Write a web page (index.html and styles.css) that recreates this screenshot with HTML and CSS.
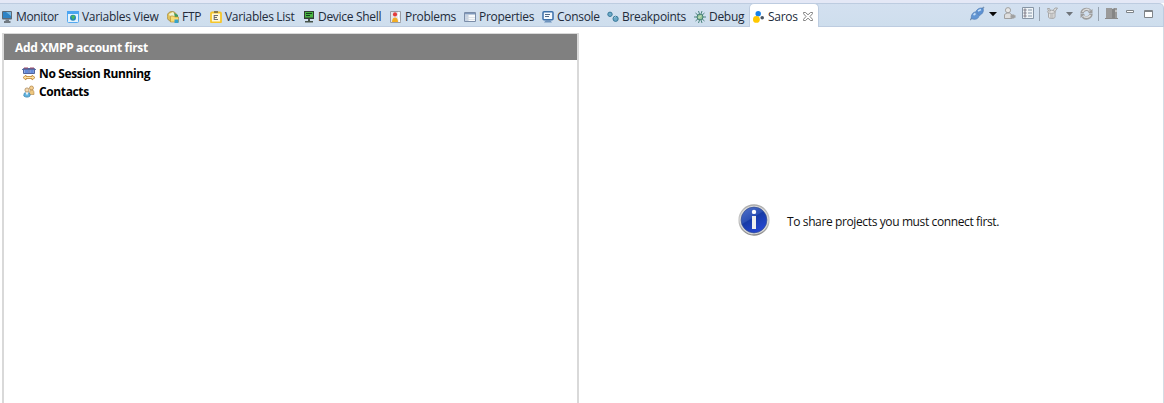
FILE: index.html
```html
<!DOCTYPE html>
<html lang="en">
<head>
<meta charset="utf-8">
<title>Saros</title>
<link rel="stylesheet" href="styles.css">
</head>
<body>
<div class="view">
  <header class="bar">
    <nav class="tabs">
      <div class="tab monitor"><svg viewBox="0 0 12 12"><rect x="2" y="0" width="10" height="8.500" rx="1" fill="#5d6a76"/><rect x="3" y="1" width="8" height="6" fill="#2e83c5"/><path d="M6 1h5v4z" fill="#75b8e4"/><path d="M5.500 8.500h3.500v1.500h1.500v2H4v-2h1.500z" fill="#707981"/></svg><span>Monitor</span></div>
      <div class="tab vview"><svg viewBox="0 0 12 12"><rect x=".5" y=".5" width="11" height="11" rx="1" fill="#e4f3ff" stroke="#54a9ef"/><path d="M0 0h12v3H0z" fill="#4ba5f2"/><circle cx="6" cy="6.700" r="3" fill="#2484bd"/><path d="M4 5l3-1 1 2-2 3z" fill="#48b85d"/></svg><span>Variables View</span></div>
      <div class="tab ftp"><svg viewBox="0 0 12 12"><circle cx="5" cy="5.500" r="5" fill="#dfc05a" stroke="#a08a48" stroke-width=".8"/><path d="M2 3l4-2 2 3-4 4z" fill="#eff5d6"/><path d="M7 2l4 2v2H8z" fill="#3a9c62"/><path d="M3.500 5h3l1 1h4v5h-8z" fill="#f8dc72" stroke="#b99337" stroke-width=".7"/><path d="M7.500 8.500h4V12h-4z" fill="#37a2cb"/></svg><span>FTP</span></div>
      <div class="tab vlist"><svg viewBox="0 0 12 12"><rect x="1" y="1.500" width="10" height="10" rx="1" fill="#fff9dc" stroke="#f5c62b" stroke-width="1.800"/><path d="M4 0h4v2H4z" fill="#8d7c45"/><path d="M4 4.500h4M4 6.500h3M4 8.500h4M4.200 4v5" stroke="#6c6c6c" fill="none"/></svg><span>Variables List</span></div>
      <div class="tab shell"><svg viewBox="0 0 12 12"><rect x="1" y="0" width="10" height="8" fill="#333e36"/><rect x="2" y="1" width="8" height="5.500" fill="#49b642"/><path d="M3 2.500h6M3 4.500h4" stroke="#173d21"/><path d="M5 8h2v2h3v1.500H2V10h3z" fill="#465349"/></svg><span>Device Shell</span></div>
      <div class="tab problems"><svg viewBox="0 0 12 12"><path d="M.5.5h10v11H.5z" fill="#e5e8ee" stroke="#9a9da5"/><path d="M8.500 1c2 2-1 3 0 5s1 3 1 5" fill="none" stroke="#fff" stroke-width="1.500"/><circle cx="5" cy="3.400" r="2.100" fill="#e33c3c"/><path d="M5 6.500c2 0 3 2 3 4.500H2c0-2.500 1-4.500 3-4.500z" fill="#f2ad24"/></svg><span>Problems</span></div>
      <div class="tab properties"><svg viewBox="0 0 12 12"><path d="M.5 1.500h11v9H.5z" fill="#f8fafc" stroke="#7b8da8"/><path d="M1 2h10v1.500H1z" fill="#7f98bb"/><path d="M1 4h3v6H1z" fill="#c5d2e2"/><path d="M4.500 4v6M1 6.500h10M1 8.500h10" stroke="#d1d8e1" stroke-width=".7"/></svg><span>Properties</span></div>
      <div class="tab console"><svg viewBox="0 0 12 12"><rect x="1" y=".8" width="10" height="8" rx="1" fill="#f5faff" stroke="#3b6fa9" stroke-width="1.500"/><path d="M3 3.500h5M3 5.500h4" stroke="#526985"/><path d="M4 9h4l2 2.500H2z" fill="#6f94bd"/></svg><span>Console</span></div>
      <div class="tab breakpoints"><svg viewBox="0 0 12 12"><circle cx="3" cy="3.300" r="2.200" fill="#6dabca" stroke="#397998"/><circle cx="8.600" cy="7.800" r="2.600" fill="#6aa8c7" stroke="#397998"/><path d="M7.500 6.500l1-1" stroke="#c7e5f1"/></svg><span>Breakpoints</span></div>
      <div class="tab debug"><svg viewBox="0 0 12 12"><path d="M0 6h12M1.500 2l9 8M10.500 2l-9 8M4.500 0l1 3M8 0L7 3M4.500 12l1-3M8 12L7 9" stroke="#3c7b70" stroke-width=".9" fill="none"/><ellipse cx="6" cy="6" rx="3" ry="2.800" fill="#9ac89d" stroke="#427e70"/><path d="M4.500 7L7 4.500" stroke="#dceccb"/></svg><span>Debug</span></div>
      <div class="tab saros active"><svg viewBox="0 0 12 12"><circle cx="5.200" cy="2.700" r="2.700" fill="#1681ea"/><circle cx="3.400" cy="8.400" r="3.400" fill="#ffc800"/><circle cx="9.200" cy="6.700" r="1.800" fill="#4b5560"/></svg><span>Saros</span><svg class="close" viewBox="0 0 10 9"><path d="M.5.5h2L5 2.800 7.500.5h2v1.200L7 4.500l2.500 2.800v1.200h-2L5 6.200 2.500 8.500h-2V7.300L3 4.500.5 1.700z" fill="#fff" stroke="#777" stroke-width=".9"/></svg></div>
    </nav>
    <svg class="tools" viewBox="0 0 194 20">
      <g transform="translate(0 3)"><path d="M0 13l3-3M11 3l3-3" stroke="#7993b3" stroke-width="1.500"/><path d="M1.500 11.500c-1-3 1.500-6.500 4-6.500L9 8.500c0 3-4 5-7.500 3z" fill="#6296d4" stroke="#527db4" stroke-width=".7"/><path d="M5.800 4.500C8 1 11 .5 13 1.500c1 2 0 5.500-3.700 7z" fill="#5c91d2" stroke="#527db4" stroke-width=".7"/><path d="M8 4l3-1.500M3.500 8l2-1.500" stroke="#c5def7" stroke-width="1.600"/></g>
      <path d="M19 8h8l-4 4.300z" fill="#080808"/>
      <g transform="translate(33 3)" stroke="#a0a0a0" stroke-width="1"><circle cx="5" cy="3.200" r="2.600" fill="#e6e6e6"/><path d="M1.500 7.500L4 6h2.500L9 8v3.500H1.500z" fill="#dedede"/><path d="M7.500 9.500h5M10 7.500v4" stroke-width="2.400"/></g>
      <g transform="translate(52 3)"><path d="M.5.5h11v11H.5z" fill="#f0f4f7" stroke="#8795a5"/><path d="M2 2h2v2H2zM2 5h2v2H2zM2 8h2v2H2z" fill="#c4b3b8" stroke="#858995" stroke-width=".7"/><path d="M6 3h4M6 6h4M6 9h4" stroke="#8596a8"/></g>
      <path d="M69.500 3v14" stroke="#96a2b0"/>
      <g transform="translate(76 3)" stroke="#a0a0a0" stroke-width=".9" fill="#e2e2e2"><path d="M2.500 5h6.500v5c0 2-6.500 2-6.500 0z"/><ellipse cx="5.500" cy="4.800" rx="4" ry="1.600"/><path d="M1.500 1.500h2l1 2.500h-2zM7 3.500L9 1h2.500L9 4.500z"/><path d="M4 8h3.500M4 10h3.500"/></g>
      <path d="M96 8h7l-3.500 4z" fill="#6f747a"/>
      <g transform="translate(110 3)" fill="none" stroke="#9d9d9d" stroke-width="3.400"><path d="M2 6.500a4.500 4.300 0 0 1 8-2.500M11 6.500a4.500 4.300 0 0 1-8 2.800"/><path d="M8 6h4.500V2zM5 7H.5v4z" fill="#9d9d9d" stroke="none"/><path d="M2.500 5c1.500-3 5-3.500 7-1.500M10.500 8c-1.500 2.500-5 3-7 1.300" stroke="#dcdcdc" stroke-width="1.500"/></g>
      <path d="M128.500 3v14" stroke="#96a2b0"/>
      <g transform="translate(135 3)"><path d="M1 1h6v10H1zM9.500 1H12v10H9.500z" fill="#9a9a9a"/><path d="M7 2l3-1v10H7z" fill="#858585"/><path d="M0 11.500h13" stroke="#8a8a8a"/><path d="M10.500 3h1v2h-1z" fill="#eee"/></g>
      <path d="M156.500 6.500h7v2h-7z" fill="#fff" stroke="#7f8489"/>
      <path d="M174.500 6.500h8v7h-8z" fill="#fff" stroke="#7f8489"/><path d="M174 7.500h9" stroke="#7f8489"/>
    </svg>
  </header>
  <main class="panes">
    <section class="roster">
      <h1>Add XMPP account first</h1>
      <div class="row session"><svg viewBox="0 0 14 14"><path d="M1.500 1.500h11v5h-11z" fill="#8fa9e2" stroke="#51649d"/><path d="M3 3h3v3H3zM8.500 3h3v3h-3z" fill="#648bd9"/><path d="M0 2.500h14M7 2v5" stroke="#51649d" stroke-width=".9"/><path d="M2 1h4M8 1h4" stroke="#a14967"/><path d="M1 10.500l3-2.300v1.300h6V8.200l3 2.300-3 2.500v-1.500H4V13z" fill="#ffe2a0" stroke="#bd812f" stroke-width=".8"/></svg><span>No Session Running</span></div>
      <div class="row contacts"><svg viewBox="0 0 14 14"><circle cx="9.500" cy="3" r="2" fill="#f5cf91" stroke="#ad8142" stroke-width=".7"/><path d="M7.500 9c0-3 .5-4 2.500-4s2 2 2 4.500H8z" fill="#edc77f" stroke="#af8144" stroke-width=".6"/><path d="M1.800 11c0-3 1-4 3.200-4s3.500 2 3 4c-1 1.500-5 1.500-6.200 0z" fill="#62b3df" stroke="#397fa9" stroke-width=".7"/><path d="M3.500 7l1.500 3.500L6.500 7z" fill="#fff"/><circle cx="5" cy="5" r="2.100" fill="#f7d9ad" stroke="#9c7c50" stroke-width=".7"/></svg><span>Contacts</span></div>
    </section>
    <section class="notice">
      <svg viewBox="0 0 32 32"><defs><linearGradient id="ring" x2="0" y2="1"><stop stop-color="#aaa"/><stop offset=".5" stop-color="#ccc"/><stop offset="1" stop-color="#888"/></linearGradient><linearGradient id="disc" x2=".6" y2="1"><stop stop-color="#5374cb"/><stop offset=".48" stop-color="#2d51b5"/><stop offset=".52" stop-color="#173ba6"/><stop offset="1" stop-color="#2546d0"/></linearGradient></defs><circle cx="16" cy="16" r="15" fill="#d8d8d8" stroke="url(#ring)" stroke-width="1.300"/><circle cx="16" cy="16" r="12.900" fill="url(#disc)" stroke="#354f91" stroke-width=".7"/><circle cx="16" cy="7.900" r="2.200" fill="#fff"/><path d="M14 12h4v13h-4z" fill="#eee"/></svg>
      <p>To share projects you must connect first.</p>
    </section>
  </main>
</div>
</body>
</html>
```
FILE: styles.css
```css
* { box-sizing: border-box; }
body { margin: 0; font: 12px/18px "Open Sans", "Noto Sans", sans-serif; color: #111; background: #fff; }
.view { height: 403px; display: flex; flex-direction: column; overflow: hidden; border-top: 3px solid #e4e8f6; }
.bar { height: 24px; flex: none; display: flex; justify-content: space-between; background: linear-gradient(#d3e0f0, #cedeed); border: 1px solid #bdcce0; border-width: 1px 1px 1px 0; border-top-right-radius: 5px; }
.tabs { display: flex; height: 23px; color: #222b3b; }
.tab { display: flex; align-items: center; flex: none; gap: 3px; white-space: nowrap; padding-top: 2px; height: 23px; }
.tab svg { width: 12px; height: 12px; flex: none; }
.monitor { width: 67px; }
.vview { width: 100px; }
.ftp { width: 43px; }
.vlist { width: 93px; }
.shell { width: 87px; }
.problems { width: 74px; }
.properties { width: 78px; }
.console { width: 65px; }
.breakpoints { width: 87px; }
.debug { width: 55px; }
.tab span { letter-spacing: -.3px; }
.tab.monitor span { letter-spacing: -.35px; margin-left: 1px; }
.tab.active { width: 70px; background: #fff; border: 1px solid #bdcce0; border-bottom: 0; border-radius: 5px 5px 0 0; padding: 2px 0 0 3px; margin-top: -1px; height: 24px; }
.tab .close { width: 10px; height: 9px; margin-left: 2px; }
.tools { width: 194px; height: 20px; flex: none; margin-right: -1px; }
.panes { flex: 1; display: flex; border-right: 1px solid #d5dce4; padding-top: 6px; }
.roster { width: 577px; margin-left: 2px; border: 2px solid #d9d9d9; border-top-width: 1px; border-bottom: 0; font-weight: bold; color: #000; letter-spacing: -.37px; }
.roster h1 { margin: 0; height: 26px; padding: 0 11px; background: #808080; color: #fff; font-size: 12px; line-height: 27px; letter-spacing: -.33px; }
.row { display: flex; align-items: center; gap: 3px; height: 18px; padding-left: 18px; }
.row svg { width: 14px; height: 14px; }
.session { margin-top: 5px; }
.notice { margin: 171px 0 0 159px; display: flex; align-items: flex-start; gap: 17px; }
.notice svg { width: 32px; height: 32px; flex: none; }
.notice p { margin: 9px 0 0; white-space: nowrap; letter-spacing: -.38px; }
```
